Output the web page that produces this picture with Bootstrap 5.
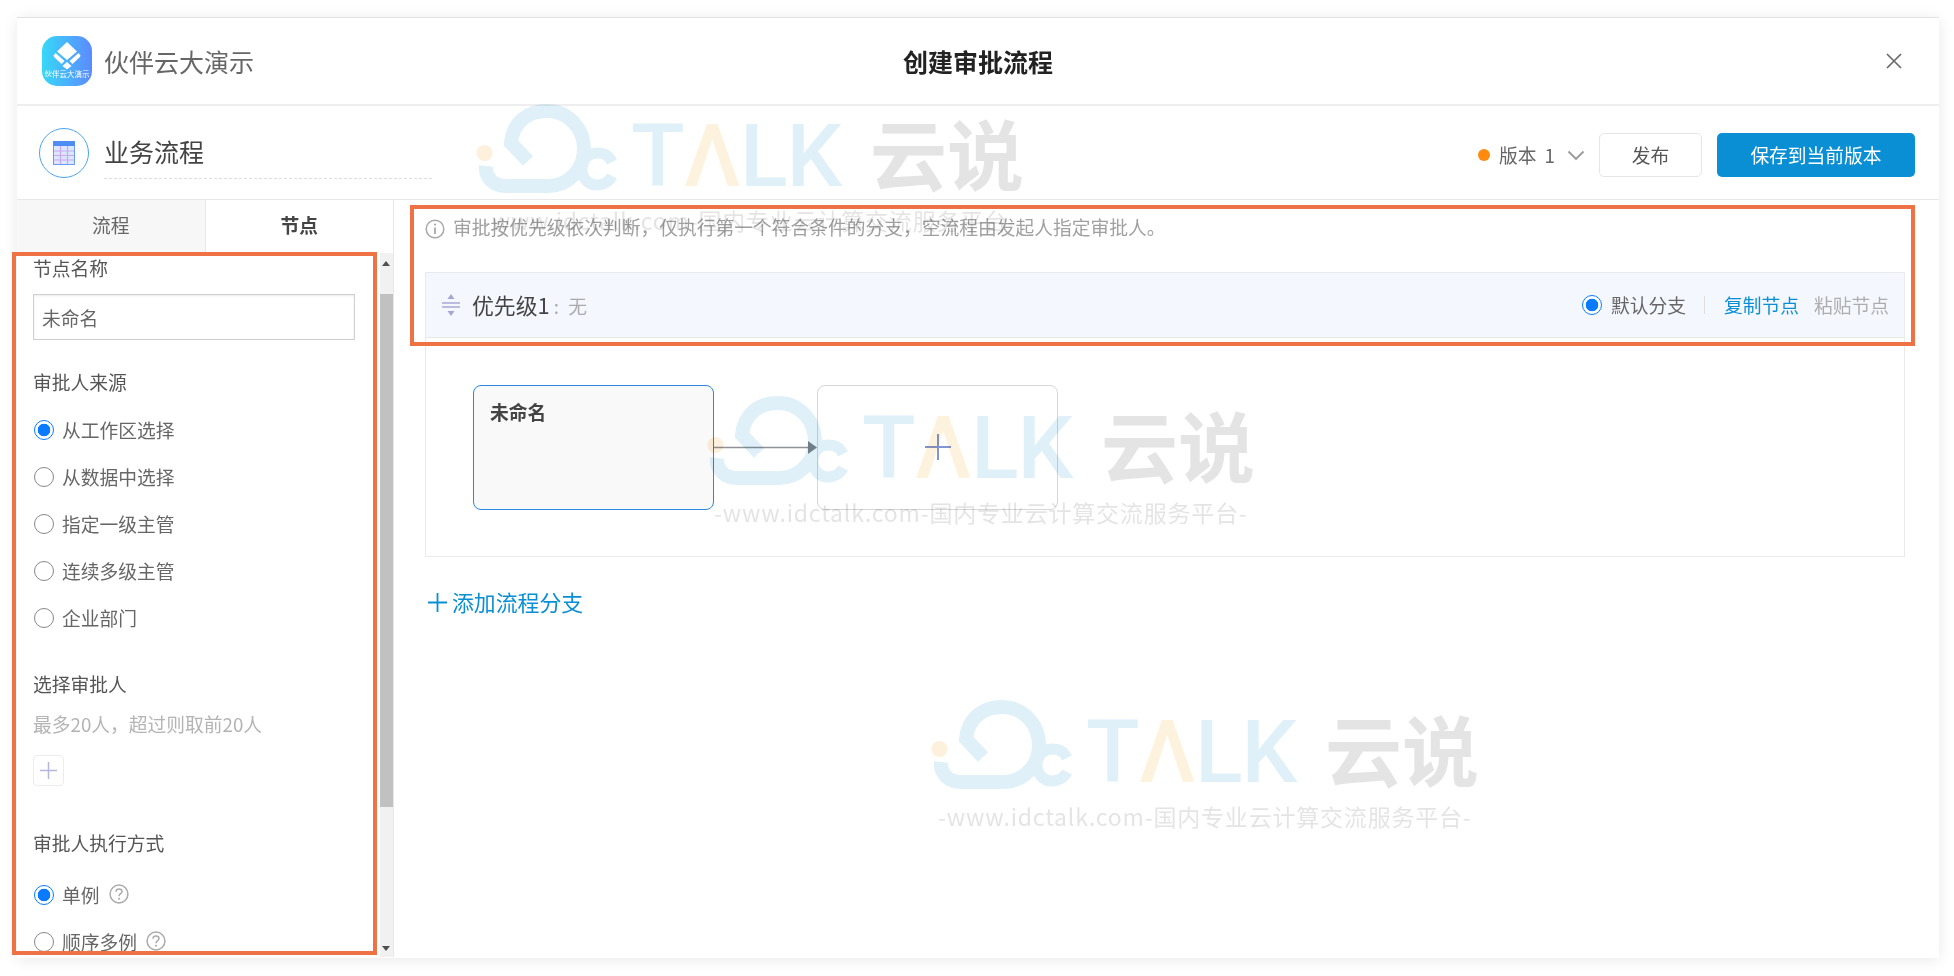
<!DOCTYPE html>
<html lang="zh-CN">
<head>
<meta charset="utf-8">
<title>创建审批流程</title>
<link href="https://cdn.jsdelivr.net/npm/bootstrap@5.3.0/dist/css/bootstrap.min.css" rel="stylesheet">
<style>
html,body{height:100%;overflow:hidden;}
body{position:relative;background:#fff;font-family:"Noto Sans CJK SC","Liberation Sans",sans-serif;font-size:18.75px;color:#555;}
.page-pad{padding:17px 15px 18px 17px;height:976px;}
.win{height:941px;border-top:1px solid #e3e3e3;box-shadow:0 2px 14px rgba(0,0,0,.09);background:#fff;}
.bar-app{height:88px;border-bottom:2px solid #eee;padding:0 36px 0 25px;}
.app-icon{width:50px;height:50px;border-radius:15px;background:linear-gradient(90deg,#37d8f8,#5c8aff);color:#fff;position:relative;overflow:hidden;flex:none;}
.app-icon span{position:absolute;left:0;right:0;top:33px;text-align:center;font-size:7.5px;line-height:10px;}
.app-name{font-size:25px;margin-left:12px;color:#666;line-height:34px;}
.app-title{font-size:25px;font-weight:700;color:#222;line-height:34px;}
.bar-flow{height:94px;border-bottom:1px solid #e8e8e8;padding:0 24px 0 22px;}
.flow-badge{width:50px;height:50px;border:1.5px solid #4aa5f2;border-radius:50%;flex:none;}
.flow-name{font-size:25px;color:#444;line-height:34px;width:328px;margin-left:15px;border-bottom:1px dashed #ddd;padding-bottom:10px;margin-top:8px;}
.ver-group{margin-top:5px;}
.ver-dot{width:12px;height:12px;border-radius:50%;background:#ff8a0d;margin-right:9px;}
.ver-txt{color:#666;line-height:26px;word-spacing:4px;}
.ver-chev{margin-left:12px;}
.btn-pub{width:103px;height:44px;border:1px solid #e6e6e6;border-radius:5px;background:#fff;color:#555;font-size:18.75px;padding:0;margin-left:14px;}
.btn-save{width:198px;height:44px;border:0;border-radius:5px;background:#0a8fd4;color:#fff;font-size:18.75px;padding:0;margin-left:15px;}
.btn-save:hover{background:#0a8fd4;}
.work{height:757px;}
.side{width:377px;border-right:1px solid #e8e8e8;flex:none;}
.tabs{height:53px;}
.tab-item{flex:1;font-size:18.75px;line-height:50px;text-align:center;color:#666;background:#f7f7f7;border-right:1px solid #e8e8e8;}
.tab-item.on{background:#fff;font-weight:700;color:#444;border-right:0;}
.side-body{height:704px;overflow:hidden;}
.side-form{width:360px;padding:1px 0 0 16px;overflow:hidden;}
.sf-label{line-height:28px;color:#555;}
.sf-input{width:322px;height:46px;margin-top:12px;border:1.5px solid #cfcfcf;border-radius:0;font-size:18.75px;color:#666;padding:0 8px;box-shadow:inset 0 1px 2px rgba(0,0,0,.08);font-family:inherit;}
.gap-source{margin-top:28px;}
.radio-list{margin-top:9.5px;}
.radio-row{height:47px;display:flex;align-items:center;margin:0;padding:0;}
.radio-row .form-check-input{width:20px;height:20px;margin:1px 8px 0 1px;float:none;border:1.5px solid #888;flex:none;}
.radio-row .form-check-input:checked[type=radio],.band-radio:checked[type=radio]{background:radial-gradient(circle,#0a7bff 0 6px,#fff 6.6px);border:1.5px solid #0a7bff;}
.radio-row label{color:#666;line-height:26px;padding-top:1px;}
.gap-pick{margin-top:29.5px;}
.hint{margin-top:12px;line-height:28px;color:#b4b4b4;}
.plus-box{width:31px;height:31px;margin-top:17px;border:1px solid #ececec;border-radius:4px;}
.gap-mode{margin-top:43px;}
.mode-list{margin-top:13.5px;}
.help-dot{width:20px;height:20px;margin-left:9px;}
.sbar{width:13px;margin-left:4px;background:#f1f1f1;position:relative;flex:none;}
.sbar-thumb{position:absolute;left:0;right:0;top:41px;height:513px;background:#c1c1c1;}
.sbar-up,.sbar-down{position:absolute;left:2px;width:0;height:0;border-left:4.5px solid transparent;border-right:4.5px solid transparent;}
.sbar-up{top:8px;border-bottom:5px solid #505050;}
.sbar-down{bottom:6px;border-top:5px solid #505050;}
.main-pane{padding:0 34px 0 31px;}
.info-row{height:72px;padding-top:15px;color:#a0a0a0;line-height:24px;}
.info-row svg{margin-right:8px;}
.flow-box{height:285px;border:1px solid #eaeaea;}
.band{height:65px;background:#f4f8fe;border-bottom:1px solid #e8e8e8;padding:0 15px 0 14px;}
.band-title{font-size:21.875px;color:#444;margin-left:10px;line-height:30px;}
.band-sub{color:#aaa;font-size:18.75px;margin-left:4px;word-spacing:5px;}
.band-radio{width:20px;height:20px;margin:0 9px 0 0;border:1.5px solid #0a7bff;flex:none;}
.band-default{color:#666;}
.band-split{width:1px;height:18px;background:#ddd;margin:0 19px 0 18px;}
.band-copy{color:#0a8fd4;margin-right:15px;text-decoration:none;}
.band-paste{color:#adadad;}
.nodes{padding:47px 0 0 47px;}
.node{width:241px;height:125px;border-radius:8px;}
.node-a{border:1.5px solid #2b88e0;background:#f9f9f9;padding:12px 16px;font-weight:700;color:#444;line-height:28px;}
.node-b{border:1px solid #d6d6d6;background:#fff;}
.node-plus{margin-top:-2px;}
.add-row{margin-top:30px;color:#0a8fd4;font-size:21.875px;line-height:30px;text-decoration:none;}
.add-row svg{margin:0 5px 0 3px;}
.wm{position:absolute;width:560px;pointer-events:none;color:#e3e3e3;mix-blend-mode:multiply;}
.wm-top{height:94px;}
.wm-logo{width:155px;flex:none;}
.wm-l{font-family:Roboto,"Liberation Sans",sans-serif;font-size:88px;font-weight:500;line-height:88px;letter-spacing:-1px;color:rgba(170,215,240,.38);margin-top:8px;}
.wm-a{color:rgba(250,215,150,.32);}
.wm-cn{font-size:77px;font-weight:700;line-height:88px;margin-left:29px;margin-top:4px;color:rgba(190,190,190,.42);}
.wm-sub{font-family:"Noto Sans CJK SC",sans-serif;font-size:23px;line-height:30px;letter-spacing:.8px;margin:7px 0 0 7px;white-space:nowrap;color:rgba(190,190,190,.42);}
.wm-one{left:476px;top:104px;}
.wm-two{left:707px;top:396px;}
.wm-three{left:931px;top:700px;}
.note-box{position:absolute;border:4px solid #ef7245;pointer-events:none;}
.note-left{left:12px;top:252px;width:365px;height:703px;}
.note-right{left:410px;top:205px;width:1505px;height:141px;}
</style>
</head>
<body>
<div class="page-pad">
<div class="win d-flex flex-column">
  <div class="bar-app d-flex align-items-center justify-content-between position-relative">
    <div class="d-flex align-items-center">
      <div class="app-icon">
        <svg width="50" height="50" viewBox="0 0 50 50"><path fill="#fff" d="M25 6 35 15.5 25 24 15 15.5ZM13.5 17 22.5 25 19.5 28 12 21 11.5 19.5ZM36.5 17 38.5 19.5 38 21 30.5 28 27.5 25ZM25 26 29.5 30 25 33.5 20.5 30Z"/></svg>
        <span>伙伴云大演示</span>
      </div>
      <div class="app-name">伙伴云大演示</div>
    </div>
    <div class="app-title position-absolute top-50 start-50 translate-middle">创建审批流程</div>
    <svg width="18" height="18" viewBox="0 0 18 18"><path d="M2 2 16 16M16 2 2 16" stroke="#666" stroke-width="1.6" fill="none"/></svg>
  </div>
  <div class="bar-flow d-flex align-items-center justify-content-between">
    <div class="d-flex align-items-center">
      <div class="flow-badge d-flex align-items-center justify-content-center">
        <svg width="22" height="24" viewBox="0 0 22 24"><rect x="0.5" y="0.5" width="21" height="23" fill="#dbe6ff" stroke="#6a9cf5"/><rect x="0" y="0" width="22" height="5" fill="#4f8df5"/><path d="M1 10H21M1 14.5H21M1 19H21M7.5 5V23M14.5 5V23" stroke="#c9a8f0" stroke-width="1.2"/></svg>
      </div>
      <div class="flow-name">业务流程</div>
    </div>
    <div class="d-flex align-items-center ver-group">
      <span class="ver-dot"></span>
      <span class="ver-txt">版本 1</span>
      <svg class="ver-chev" width="18" height="11" viewBox="0 0 18 11"><path d="M1.5 1.5 9 9 16.5 1.5" stroke="#999" stroke-width="1.8" fill="none"/></svg>
      <button type="button" class="btn btn-pub">发布</button>
      <button type="button" class="btn btn-save">保存到当前版本</button>
    </div>
  </div>
  <div class="work d-flex">
    <div class="side d-flex flex-column">
      <div class="tabs d-flex"><div class="tab-item">流程</div><div class="tab-item on">节点</div></div>
      <div class="side-body d-flex">
        <div class="side-form">
          <div class="sf-label">节点名称</div>
          <input class="form-control sf-input" type="text" value="未命名">
          <div class="sf-label gap-source">审批人来源</div>
          <div class="radio-list">
            <div class="form-check radio-row"><input class="form-check-input" type="radio" name="src" id="s1" checked><label for="s1">从工作区选择</label></div>
            <div class="form-check radio-row"><input class="form-check-input" type="radio" name="src" id="s2"><label for="s2">从数据中选择</label></div>
            <div class="form-check radio-row"><input class="form-check-input" type="radio" name="src" id="s3"><label for="s3">指定一级主管</label></div>
            <div class="form-check radio-row"><input class="form-check-input" type="radio" name="src" id="s4"><label for="s4">连续多级主管</label></div>
            <div class="form-check radio-row"><input class="form-check-input" type="radio" name="src" id="s5"><label for="s5">企业部门</label></div>
          </div>
          <div class="sf-label gap-pick">选择审批人</div>
          <div class="hint">最多20人，超过则取前20人</div>
          <div class="plus-box d-flex align-items-center justify-content-center">
            <svg width="19" height="19" viewBox="0 0 19 19"><path d="M9.5 1V18M1 9.5H18" stroke="#b4b7d8" stroke-width="1.5"/></svg>
          </div>
          <div class="sf-label gap-mode">审批人执行方式</div>
          <div class="mode-list">
            <div class="form-check radio-row"><input class="form-check-input" type="radio" name="mode" id="m1" checked><label for="m1">单例</label>
              <svg class="help-dot" viewBox="0 0 19 19"><circle cx="9.5" cy="9.5" r="8.5" fill="none" stroke="#aaa" stroke-width="1.4"/><path d="M6.6 7.4C6.6 5.6 8 4.7 9.5 4.7S12.4 5.7 12.4 7.2C12.4 9.2 9.5 9.2 9.5 11.6" fill="none" stroke="#aaa" stroke-width="1.4"/><circle cx="9.5" cy="14" r="1" fill="#aaa"/></svg>
            </div>
            <div class="form-check radio-row"><input class="form-check-input" type="radio" name="mode" id="m2"><label for="m2">顺序多例</label>
              <svg class="help-dot" viewBox="0 0 19 19"><circle cx="9.5" cy="9.5" r="8.5" fill="none" stroke="#aaa" stroke-width="1.4"/><path d="M6.6 7.4C6.6 5.6 8 4.7 9.5 4.7S12.4 5.7 12.4 7.2C12.4 9.2 9.5 9.2 9.5 11.6" fill="none" stroke="#aaa" stroke-width="1.4"/><circle cx="9.5" cy="14" r="1" fill="#aaa"/></svg>
            </div>
          </div>
        </div>
        <div class="sbar"><span class="sbar-up"></span><div class="sbar-thumb"></div><span class="sbar-down"></span></div>
      </div>
    </div>
    <div class="main-pane flex-grow-1">
      <div class="info-row d-flex align-items-start">
        <svg class="mt-1" width="20" height="20" viewBox="0 0 20 20"><circle cx="10" cy="10" r="8.8" fill="none" stroke="#a8a8a8" stroke-width="1.5"/><path d="M10 8.5V15" stroke="#a8a8a8" stroke-width="1.8"/><circle cx="10" cy="5.6" r="1.1" fill="#a8a8a8"/></svg>
        <span>审批按优先级依次判断，仅执行第一个符合条件的分支，空流程由发起人指定审批人。</span>
      </div>
      <div class="flow-box">
        <div class="band d-flex align-items-center justify-content-between">
          <div class="d-flex align-items-center">
            <svg width="22" height="24" viewBox="0 0 22 24"><path d="M2 10H20M2 14H20" stroke="#a6a6d2" stroke-width="1.5"/><path d="M11 1 7.5 6H14.5ZM11 23 7.5 18H14.5Z" fill="#a6a6d2"/></svg>
            <span class="band-title">优先级1<span class="band-sub">: 无</span></span>
          </div>
          <div class="d-flex align-items-center">
            <input class="form-check-input band-radio" type="radio" checked aria-label="默认分支">
            <span class="band-default">默认分支</span>
            <span class="band-split"></span>
            <a class="band-copy" href="#">复制节点</a>
            <span class="band-paste">粘贴节点</span>
          </div>
        </div>
        <div class="nodes d-flex align-items-start">
          <div class="node node-a">未命名</div>
          <svg width="103" height="125" viewBox="0 0 103 125"><path d="M0 62.5H94" stroke="#8f9396" stroke-width="1.6"/><path d="M94 56 103 62.5 94 69Z" fill="#80868a"/></svg>
          <div class="node node-b d-flex align-items-center justify-content-center">
            <svg class="node-plus" width="26" height="26" viewBox="0 0 26 26"><path d="M13 0V26M0 13H26" stroke="#8296d6" stroke-width="2"/></svg>
          </div>
        </div>
      </div>
      <a class="add-row d-flex align-items-center" href="#">
        <svg width="19" height="19" viewBox="0 0 19 19"><path d="M9.5 0V19M0 9.5H19" stroke="#0a8fd4" stroke-width="1.8"/></svg>
        添加流程分支
      </a>
    </div>
  </div>
</div>
</div>

<div class="wm wm-one">
  <div class="wm-top d-flex">
    <div class="wm-logo"><svg width="145" height="94" viewBox="0 0 145 94"><circle cx="8.5" cy="49" r="8" fill="#fdf0dc"/><path d="M52 57 35 39C37 18 52 7 71 7 92 7 108 24 108 45 108 66 92 82 72 82H30C17 82 9 73 10 62" fill="none" stroke="#dff0f9" stroke-width="14"/><path d="M136 58C132 50 127 49 121 49 112 49 106 56 106 65 106 75 113 81 121 81 127 81 133 78 136 72" fill="none" stroke="#dff0f9" stroke-width="11"/></svg></div>
    <div class="wm-l">T<span class="wm-a">Λ</span>LK</div><div class="wm-cn">云说</div>
  </div>
  <div class="wm-sub">-www.idctalk.com-国内专业云计算交流服务平台-</div>
</div>
<div class="wm wm-two">
  <div class="wm-top d-flex">
    <div class="wm-logo"><svg width="145" height="94" viewBox="0 0 145 94"><circle cx="8.5" cy="49" r="8" fill="#fdf0dc"/><path d="M52 57 35 39C37 18 52 7 71 7 92 7 108 24 108 45 108 66 92 82 72 82H30C17 82 9 73 10 62" fill="none" stroke="#dff0f9" stroke-width="14"/><path d="M136 58C132 50 127 49 121 49 112 49 106 56 106 65 106 75 113 81 121 81 127 81 133 78 136 72" fill="none" stroke="#dff0f9" stroke-width="11"/></svg></div>
    <div class="wm-l">T<span class="wm-a">Λ</span>LK</div><div class="wm-cn">云说</div>
  </div>
  <div class="wm-sub">-www.idctalk.com-国内专业云计算交流服务平台-</div>
</div>
<div class="wm wm-three">
  <div class="wm-top d-flex">
    <div class="wm-logo"><svg width="145" height="94" viewBox="0 0 145 94"><circle cx="8.5" cy="49" r="8" fill="#fdf0dc"/><path d="M52 57 35 39C37 18 52 7 71 7 92 7 108 24 108 45 108 66 92 82 72 82H30C17 82 9 73 10 62" fill="none" stroke="#dff0f9" stroke-width="14"/><path d="M136 58C132 50 127 49 121 49 112 49 106 56 106 65 106 75 113 81 121 81 127 81 133 78 136 72" fill="none" stroke="#dff0f9" stroke-width="11"/></svg></div>
    <div class="wm-l">T<span class="wm-a">Λ</span>LK</div><div class="wm-cn">云说</div>
  </div>
  <div class="wm-sub">-www.idctalk.com-国内专业云计算交流服务平台-</div>
</div>

<div class="note-box note-left"></div>
<div class="note-box note-right"></div>

<script src="https://cdn.jsdelivr.net/npm/bootstrap@5.3.0/dist/js/bootstrap.bundle.min.js"></script>
</body>
</html>
